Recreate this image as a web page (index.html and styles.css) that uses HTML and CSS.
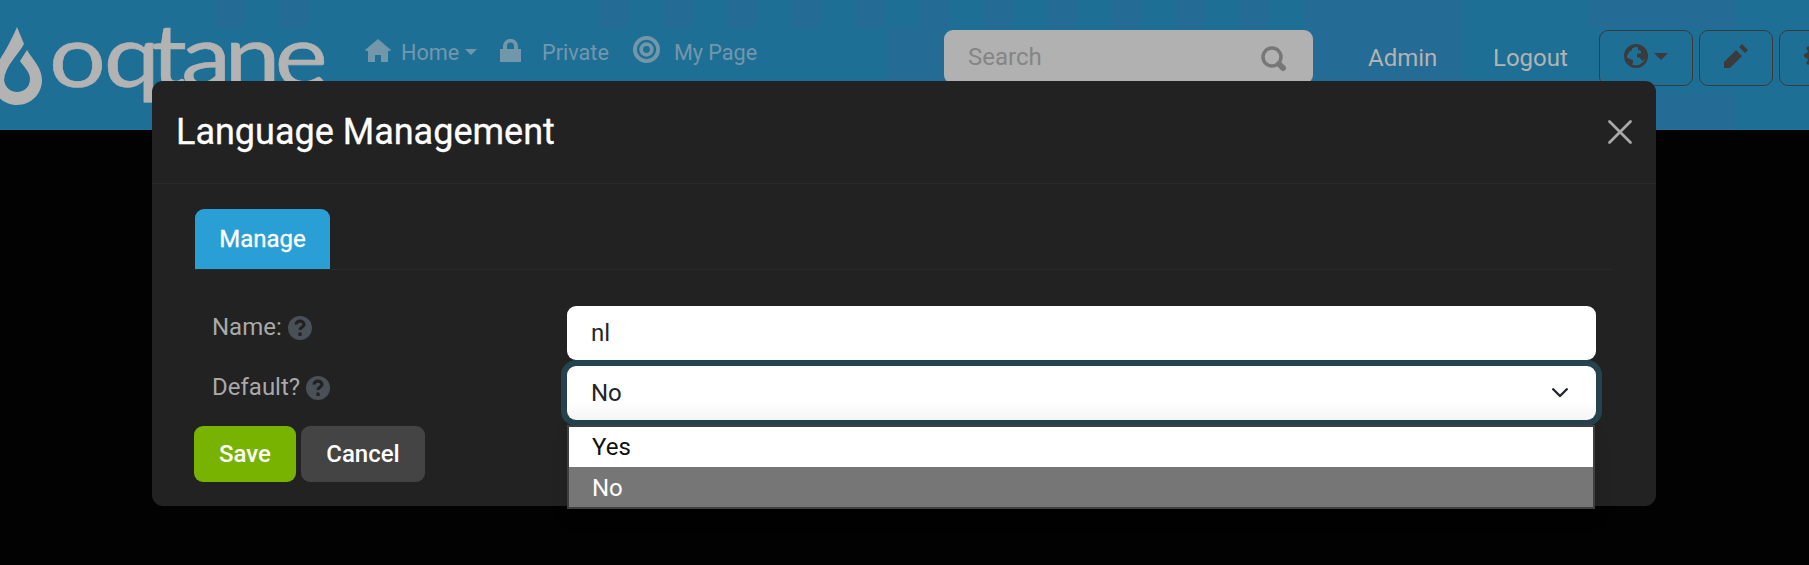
FILE: index.html
```html
<!DOCTYPE html>
<html lang="en">
<head>
<meta charset="utf-8">
<title>Language Management</title>
<link rel="stylesheet" href="styles.css">
</head>
<body>
<header class="topbar">
  <div class="brand">
    <svg class="logo" width="340" height="130" viewBox="0 0 340 130">
      <path class="drop" d="M17 27 L24 44 C18 55 5 66 4 80 C5 88 11 92 17 92 C24 92 30 87 30 79 C30 72 24 67 20 61 L27 50 C33 60 42 68 42 80 C42 94 31 105 17 105 C3 105 -8 94 -8 80 C-8 66 4 58 17 27 Z"/>
      <text class="wordmark" transform="scale(1.14 1)" y="87" x="43 91 132.500 159 197 241">oqtane</text>
    </svg>
  </div>
  <nav class="menu">
    <a class="menu-item"><svg class="ico-home" width="26" height="23" viewBox="0 0 26 23"><path d="M13 0 L26 11 L25 12 H23 V23 H16 V16 H10 V23 H3 V12 H1 L0 11 Z"/></svg><span>Home</span><i class="caret"></i></a>
    <a class="menu-item lock"><svg width="21" height="23" viewBox="0 0 21 23"><path fill-rule="evenodd" d="M0 10 H3 V7 A7.3 7 0 0 1 18 7 V10 H21 V23 H0 Z M7 10 H14 V7 A3.5 3.5 0 0 0 7 7 Z"/></svg><span>Private</span></a>
    <a class="menu-item target"><svg width="27" height="27" viewBox="0 0 27 27"><circle class="ring" cx="13.5" cy="13.5" r="11.6"/><circle class="ring" cx="13.5" cy="13.5" r="5.3"/></svg><span>My Page</span></a>
  </nav>
  <div class="search"><span>Search</span><svg width="26" height="26" viewBox="0 0 26 26"><circle cx="11" cy="11" r="9"/><path d="M18 18 L22 22"/></svg></div>
  <a class="account admin">Admin</a>
  <a class="account logout">Logout</a>
  <div class="tools">
    <div class="tool globe"><svg width="24" height="24" viewBox="0 0 24 24"><circle class="outline" cx="12" cy="12" r="10.6"/><path d="M2 7 L5 3 L12 1 L11 3 L8 4.500 L8 6 L5 8 L3 12 Z M2 13 L6 15 L9 16 L9 19 L7 21 L4 19 Z M14 2 L20 4 L23 10 L22 14 L18 17 L16 14 L13 13 L13 10 L17 9 L17 7 L14 6 Z"/></svg><i class="caret"></i></div>
    <div class="tool pencil"><svg width="24" height="24" viewBox="0 0 24 24"><path d="M0 18 L12 6 L18 12 L6 24 H0 Z M18 0 L24 6 L21 9 L15 3 Z"/></svg></div>
    <div class="tool gear"><svg width="24" height="24" viewBox="0 0 24 24"><path fill-rule="evenodd" d="M10 0 H14 L15 4 L17 5 L20 2.500 L22 5 L20 8 L20.500 10 L24 11 V14 L20.500 15 L19 18 L21 20 L19 22 L16 20 L14 21 L13 24 H10 L9 20 L7 19 L4 21 L2 19 L4 16 L3 14 L0 13 V10 L3 9 L4 7 L2 4 L4 2 L7 4 L9 3 Z M12 8 A4 4 0 1 0 12 16 A4 4 0 1 0 12 8 Z"/></svg></div>
  </div>
</header>

<main class="modal">
  <div class="modal-header">
    <h1>Language Management</h1>
    <svg class="close" width="24" height="24" viewBox="0 0 24 24"><path d="M1.500 1.500 L22.500 22.500 M22.500 1.500 L1.500 22.500"/></svg>
  </div>
  <div class="modal-body">
    <div class="tabs"><a class="tab">Manage</a></div>
    <div class="row">
      <label>Name: <svg class="help" width="24" height="24" viewBox="0 0 24 24"><circle cx="12" cy="12" r="12"/><path d="M8 8.500 C8 4 16 4 16 8.500 C16 11 12 11 12 14"/><path d="M12 16.500 V20"/></svg></label>
      <div class="control">nl</div>
    </div>
    <div class="row">
      <label>Default? <svg class="help" width="24" height="24" viewBox="0 0 24 24"><circle cx="12" cy="12" r="12"/><path d="M8 8.500 C8 4 16 4 16 8.500 C16 11 12 11 12 14"/><path d="M12 16.500 V20"/></svg></label>
      <div class="control select">No<svg class="chevron" width="16" height="10" viewBox="0 0 16 10"><path d="M1.200 1.200 L8 8 L14.800 1.200"/></svg>
        <div class="options"><div class="option">Yes</div><div class="option selected">No</div></div>
      </div>
    </div>
    <div class="actions"><button class="btn save">Save</button><button class="btn cancel">Cancel</button></div>
  </div>
</main>
</body>
</html>
```

FILE: styles.css
```css
* { box-sizing: border-box; }
body {
  margin: 0;
  height: 565px;
  overflow: hidden;
  background: #020202;
  font: 24px/36px Roboto, sans-serif;
  color: #a9a9a9;
}
.topbar {
  display: flex;
  align-items: flex-start;
  width: 1809px;
  height: 130px;
  overflow: hidden;
  background:
    linear-gradient(#246b95, #246b95) 1304px 0 / 158px 81px no-repeat,
    linear-gradient(#246b95, #246b95) 1590px 0 / 146px 28px no-repeat,
    linear-gradient(#246b95, #246b95) 1656px 93px / 80px 37px no-repeat,
    linear-gradient(#246b95, #246b95) 888px 28px / 56px 53px no-repeat,
    repeating-linear-gradient(90deg, #246b95 0 30px, #1e6f96 30px 64px) 600px 0 / 704px 28px no-repeat,
    repeating-linear-gradient(90deg, #246b95 0 30px, #1e6f96 30px 64px) 216px 0 / 96px 28px no-repeat,
    #1e6f96;
}
.brand { width: 365px; height: 130px; flex: none; }
.logo { display: block; }
.drop { fill: #b3b3b3; }
.wordmark { fill: #b3b3b3; stroke: #b3b3b3; stroke-width: .6; font: 88px Lato, sans-serif; }
.menu { display: flex; width: 579px; padding-top: 35px; flex: none; font-size: 21.6px; color: #7397aa; }
.menu-item { display: flex; align-items: flex-start; }
.menu-item svg { fill: #7397aa; margin-top: 4px; }
.menu-item .ring { fill: none; stroke: #7397aa; stroke-width: 3.8; }
.menu-item span { margin-left: 10px; }
.caret { border: 6px solid transparent; border-top-color: currentColor; border-bottom: 0; margin: 14px 0 0 6px; }
.lock { margin-left: 23px; }
.lock span { margin-left: 21px; }
.target { margin-left: 24px; }
.menu-item.target svg { margin-top: 1px; }
.target span { margin-left: 14px; }
.search {
  display: flex;
  justify-content: space-between;
  width: 369px;
  height: 54px;
  margin-top: 30px;
  padding: 9px 26px 0 24px;
  flex: none;
  border-radius: 9px;
  background: #b1b1b1;
  color: #858585;
}
.search svg { fill: none; stroke: #777; stroke-width: 3.5; margin-top: 7px; }
.search path { stroke-width: 6; stroke-linecap: round; }
.account { margin-top: 40px; color: #b3b3b3; flex: none; }
.admin { width: 125px; margin-left: 55px; }
.logout { width: 106px; }
.tools { display: flex; gap: 6px; margin-top: 30px; color: #3b3b3b; }
.tool { display: flex; height: 56px; flex: none; border: 1px solid #3b3b3b; border-radius: 9px; padding: 13px 24px; }
.tool svg { fill: #3b3b3b; flex: none; }
.tool .outline { fill: none; stroke: #3b3b3b; stroke-width: 2.8; }
.globe { width: 94px; }
.globe .caret { border-width: 7px; border-bottom: 0; margin: 9px 0 0 6px; }
.pencil, .gear { width: 74px; }
.modal {
  position: absolute;
  left: 152px;
  top: 81px;
  width: 1504px;
  height: 425px;
  border-radius: 11px;
  background: #222;
}
.modal-header { display: flex; align-items: center; justify-content: space-between; height: 103px; padding: 0 24px; border-bottom: 1px solid #282828; }
h1 { margin: 0; font-size: 36px; line-height: 54px; font-weight: 400; color: #fff; -webkit-text-stroke: .3px #fff; }
.close { fill: none; stroke: #a9a9a9; stroke-width: 2.700; stroke-linecap: round; }
.modal-body { padding: 25px 42px 0; }
.tabs { height: 61px; margin-bottom: 36px; border-bottom: 1px solid #292929; display: flex; }
.tab { width: 135px; height: 60px; margin-left: 1px; padding-top: 12px; border-radius: 9px 9px 0 0; background: #2a9fd6; color: #fff; text-align: center; -webkit-text-stroke: .3px #fff; }
.row { display: flex; justify-content: space-between; height: 60px; padding: 0 18px; }
label { display: flex; align-items: flex-start; gap: 6px; padding-top: 3px; }
.help { margin-top: 7px; fill: #495057; }
.help path { fill: none; stroke: #222; stroke-width: 3.200; }
.control { position: relative; width: 1029px; height: 54px; padding: 9px 24px; border-radius: 9px; background: #fff; color: #212529; }
.select { box-shadow: 0 0 0 6px #25434f; background: linear-gradient(#fff 65%, #f6f6f6); }
.chevron { position: absolute; right: 28px; top: 22px; fill: none; stroke: #212529; stroke-width: 2.300; stroke-linecap: round; stroke-linejoin: round; }
.options { position: absolute; left: 0; top: 59px; width: 1028px; height: 84px; border: 2px solid #3f3f3f; background: #fff; box-shadow: 0 8px 16px rgba(0, 0, 0, .1); }
.option { height: 40px; line-height: 41px; padding-left: 23px; color: #111; }
.selected { background: #767676; color: #fff; line-height: 43px; }
.actions { display: flex; gap: 5px; }
.btn { height: 56px; border: 0; border-radius: 9px; font: 500 24px/36px Roboto, sans-serif; color: #fff; }
.save { width: 102px; background: #77b300; }
.cancel { width: 124px; background: #444; }
```
